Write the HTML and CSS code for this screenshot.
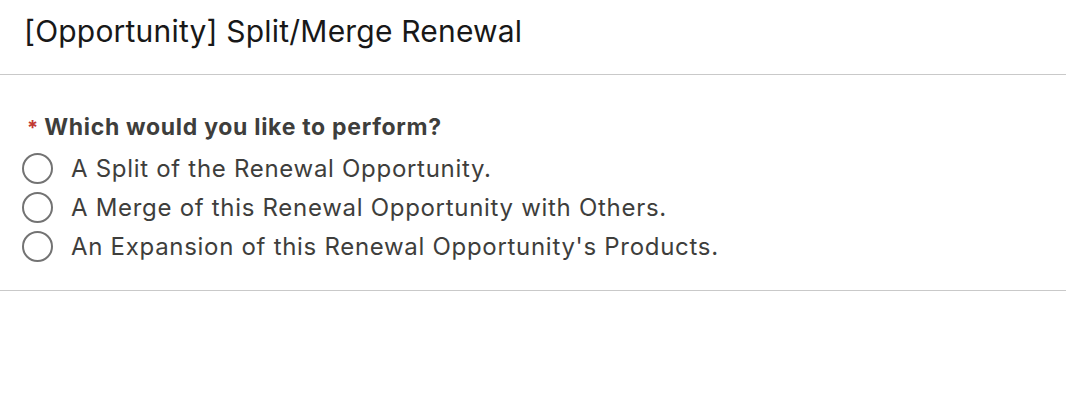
FILE: index.html
```html
<!DOCTYPE html>
<html lang="en">
<head>
    <meta charset="UTF-8">
    <title>[Opportunity] Split/Merge Renewal</title>
    <link rel="stylesheet" href="styles.css">
</head>
<body>
    <div class="header">
        <h1>[Opportunity] Split/Merge Renewal</h1>
    </div>

    <!-- flow body -->
    <div class="flow-body">
        <fieldset class="radio-group">
            <legend><abbr class="required" title="required">*</abbr>Which would you like to perform?</legend>
            <label class="radio">
                <input type="radio" name="action" value="split">
                <span class="faux"></span>
                <span class="text">A Split of the Renewal Opportunity.</span>
            </label>
            <label class="radio">
                <input type="radio" name="action" value="merge">
                <span class="faux"></span>
                <span class="text">A Merge of this Renewal Opportunity with Others.</span>
            </label>
            <label class="radio">
                <input type="radio" name="action" value="expand">
                <span class="faux"></span>
                <span class="text">An Expansion of this Renewal Opportunity's Products.</span>
            </label>
        </fieldset>
    </div>
</body>
</html>
```

FILE: styles.css
```css
body {
    margin: 0;
    font-family: Inter, 'Liberation Sans', Arial, sans-serif;
    color: #3e3e3c;
    background: #fff;
}
.header {
    height: 75px;
    border-bottom: 1px solid #c9c9c9;
    padding: 0 24px;
    box-sizing: border-box;
}
.header h1 {
    margin: 0;
    padding-top: 12px;
    font-size: 30px;
    font-weight: normal;
    line-height: 38px;
    letter-spacing: 0.2px;
    color: #181818;
}
.flow-body {
    padding: 37px 22px 24px;
    border-bottom: 1px solid #c9c9c9;
}
.radio-group {
    margin: 0;
    padding: 0;
    border: none;
}
.radio-group legend {
    padding: 0;
    font-size: 23px;
    font-weight: bold;
    line-height: 30px;
    letter-spacing: 0.7px;
    margin-bottom: 6px;
}
.required {
    color: #c23934;
    text-decoration: none;
    font-size: 20px;
    letter-spacing: 0;
    margin: 0 6px 0 5px;
}
.radio {
    display: flex;
    align-items: center;
    gap: 18px;
    height: 39px;
}
.radio input {
    display: none;
}
.faux {
    width: 31px;
    height: 31px;
    border: 2px solid #737373;
    border-radius: 50%;
    box-sizing: border-box;
}
.text {
    font-size: 24px;
    letter-spacing: 0.7px;
}
```
